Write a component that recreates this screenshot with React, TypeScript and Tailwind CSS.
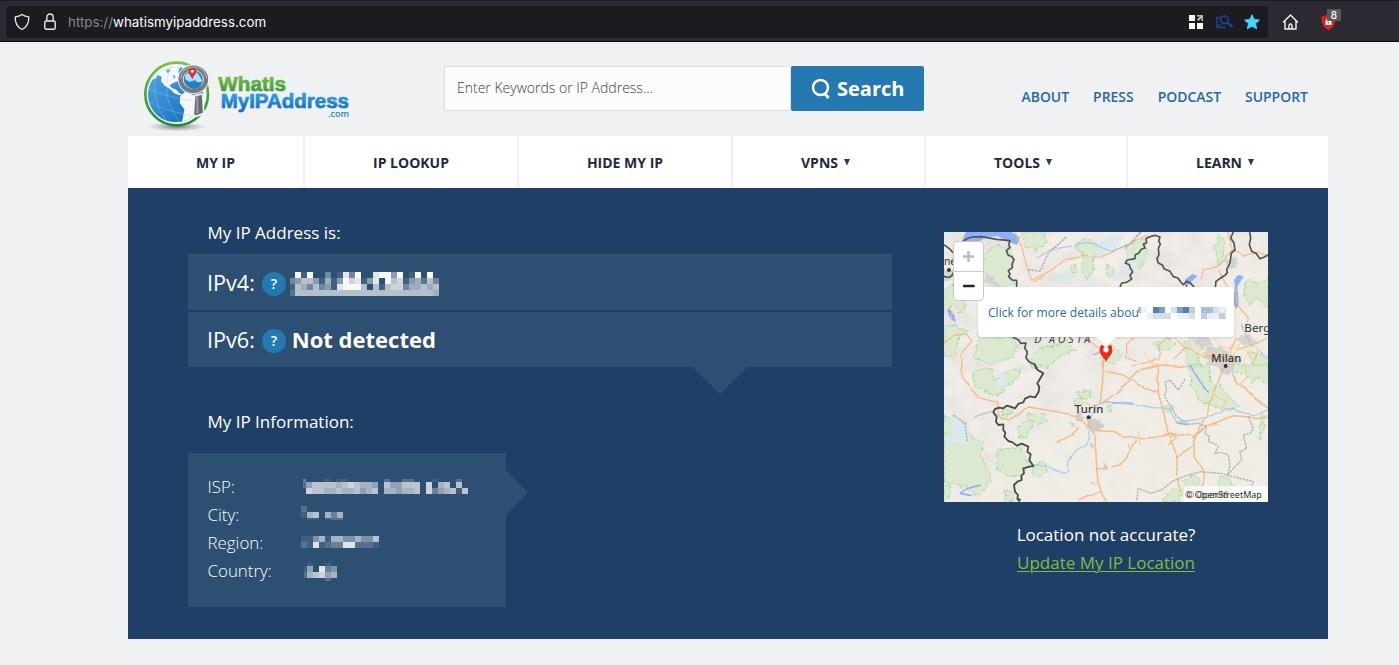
import React from "react";

const sans = "font-['Open_Sans',sans-serif]";

type MosaicProps = { rows: string[]; width: number; height: number; colour: string; className?: string; first?: number; heights?: number[] };

function Mosaic({ rows, width, height, colour, className, first = 6, heights = [6, 6, 6, 6] }: MosaicProps) {
  return (
    <svg width={width} height={height} className={className} shapeRendering="crispEdges" aria-hidden="true">
      {rows.map((row, y) =>
        row.split("").map((c, x) =>
          c === "0" ? null : (
            <rect
              key={`${x}-${y}`}
              x={x === 0 ? 0 : first + (x - 1) * 6}
              y={heights.slice(0, y).reduce((a, b) => a + b, 0)}
              width={x === 0 ? first : 6}
              height={heights[y]}
              fill={colour}
              opacity={Number(c) / 9.3}
            />
          ),
        ),
      )}
    </svg>
  );
}

function BrowserBar() {
  return (
    <div className="flex h-[42px] items-center border-b border-t border-b-[#0c0c0d] border-t-[#1c1b22] bg-[#2b2a33] pl-1.5 pt-px">
      <div className="flex h-8 w-[1262px] items-center rounded-[4px] bg-[#1c1b22] pl-2 pr-2">
        <svg width="16" height="18" viewBox="0 0 16 18" fill="none" stroke="#e8e8ea" strokeWidth="1.3" strokeLinejoin="round">
          <path d="M8 1.5C6 2.8 3.8 3.6 1.2 3.8C1 9.5 2.6 14 8 16.5C13.400 14 15 9.500 14.800 3.800C12.200 3.600 10 2.800 8 1.500Z" />
        </svg>
        <svg className="ml-3.5" width="12" height="18" viewBox="0 0 12 18" fill="none" stroke="#e8e8ea" strokeWidth="1.4">
          <rect x=".8" y="8" width="10.400" height="8.300" rx="1.500" />
          <path d="M2.800 8V4.500a3.200 3.500 0 0 1 6.400 0V8" />
        </svg>
        <span className="ml-3 pt-px font-[Inter,sans-serif] text-[13.35px] text-[#85848b]">
          https://<span className="text-[#fbfbfe]">whatismyipaddress.com</span>
        </span>
        <div className="ml-auto flex items-center">
          <svg width="16" height="16" viewBox="0 0 16 16">
            <path fill="#fff" d="M1 1h6v6H1zM1 9h6v6H1zM9 9h6v6H9z" />
            <path fill="#b9b9bc" d="M9 1h6v6h-1.500V4L10.500 7 9 5.500 12 2.500H9z" />
          </svg>
          <svg className="ml-3" width="17" height="16" viewBox="0 0 17 16" fill="none" stroke="#1f448c">
            <path strokeWidth="1.400" d="M4 3.500H1V13.500h9M1 13.500L5 10" />
            <circle cx="8.500" cy="5.800" r="3.800" strokeWidth="1.600" />
            <path strokeWidth="2.400" d="M11.300 8.600L16.500 13" />
          </svg>
          <svg className="ml-[11px]" width="16" height="16" viewBox="0 0 16 16">
            <path fill="#41d6fb" stroke="#41d6fb" strokeWidth="1" strokeLinejoin="round" d="M8 .8l2.100 4.800 5.300.5-4 3.500 1.200 5.200L8 12.100l-4.600 2.700 1.200-5.200-4-3.500 5.300-.5z" />
          </svg>
        </div>
      </div>
      <svg className="ml-[14px]" width="17" height="18" viewBox="0 0 17 18" fill="none" stroke="#f5f5f7" strokeWidth="1.400" strokeLinejoin="round" strokeLinecap="round">
        <path d="M1.500 9L8.500 2l7 7M3 8v8h11V8M7 16v-3.500a1.500 1.500 0 0 1 3 0V16" />
      </svg>
      <div className="relative ml-[22px] h-6 w-6">
        <svg className="mt-1" width="15" height="17" viewBox="0 0 15 17">
          <path fill="#d9221f" d="M7.500 0C5.500 1.500 3 2 .5 2c-.2 6.500.8 11 7 14.200C13.700 13 14.700 8.500 14.500 2 12 2 9.500 1.500 7.500 0z" />
          <path fill="#fff" d="M4.500 6.700h6V11h-6z" />
          <path fill="none" stroke="#fff" strokeWidth="1.100" d="M5.800 7V5.500h3.400V7" />
          <circle cx="7.500" cy="8.700" r=".8" fill="#d9221f" />
        </svg>
        <span className="absolute left-[6px] top-[-1px] flex h-3 w-[14px] items-center justify-center bg-[#595a59] font-[Inter,sans-serif] text-[10px] font-medium leading-none text-white">8</span>
      </div>
    </div>
  );
}

function Logo() {
  return (
    <svg width="225" height="84" viewBox="0 0 675 252" role="img" aria-label="WhatIs MyIPAddress.com">
      <defs>
        <linearGradient id="ring" x1="0" y1="0" x2="0" y2="1"><stop offset="0" stopColor="#7ac143" /><stop offset="1" stopColor="#258a3a" /></linearGradient>
        <linearGradient id="sea" x1="0" y1="0" x2="1" y2="1"><stop offset="0" stopColor="#52a9e3" /><stop offset="1" stopColor="#0f68ba" /></linearGradient>
        <linearGradient id="green" x1="0" y1="0" x2="0" y2="1"><stop offset=".2" stopColor="#78bd43" /><stop offset="1" stopColor="#2e9140" /></linearGradient>
        <linearGradient id="blue" x1="0" y1="0" x2="0" y2="1"><stop offset=".2" stopColor="#2a9de4" /><stop offset="1" stopColor="#1764b8" /></linearGradient>
        <radialGradient id="shade"><stop offset="0" stopColor="#555" stopOpacity=".75" /><stop offset="1" stopColor="#777" stopOpacity="0" /></radialGradient>
        <clipPath id="globe"><circle cx="122" cy="128" r="83" /></clipPath>
      </defs>
      <ellipse cx="125" cy="224" rx="88" ry="14" fill="url(#shade)" />
      <circle cx="125" cy="126" r="94" fill="#f7f9fa" stroke="url(#ring)" strokeWidth="8" />
      <circle cx="122" cy="128" r="83" fill="url(#sea)" />
      <g clipPath="url(#globe)">
        <path fill="#f5f8fa" d="M62 66L78 50 104 40 138 38 130 60 140 80 128 88 116 92 104 100 110 108 122 112 132 122 142 128 134 130 118 124 104 110 90 102 78 88 80 74ZM136 132L150 120 176 130 190 146 192 164 172 200 152 212 140 214 144 196 148 172 134 152Z" />
        <path fill="#f5f8fa" d="M46 84L66 56 72 62 62 80Z" />
        <path fill="#65b4e6" d="M92 56l10-6 4 8-8 6zM112 70l10 2-4 10z" />
        <path fill="none" stroke="#9bd2f1" strokeWidth="2" opacity=".55" d="M36 108Q96 138 205 152M40 148Q90 178 185 194M68 52Q38 128 94 208M108 44Q72 128 134 212" />
      </g>
      <path d="M179 131l24-5 3 58-22 9-9-4z" fill="#66686b" stroke="#f4f5f6" strokeWidth="5" />
      <path d="M184 132l6-1 1 52-7 3z" fill="#999b9e" />
      <ellipse cx="175" cy="82" rx="38" ry="36" fill="#308dce" stroke="#f5f5f5" strokeWidth="18" />
      <ellipse cx="175" cy="82" rx="38" ry="35" fill="none" stroke="#77797c" strokeWidth="13" />
      <path fill="none" stroke="#b9bbbd" strokeWidth="3" d="M137 80Q140 46 176 45Q209 46 215 78" />
      <path d="M150 70Q170 54 188 64L203 88Q190 96 180 84L164 90 152 84Z" fill="#b5def3" />
      <path d="M148 82Q175 100 204 88Q198 109 176 111Q155 109 148 82Z" fill="#1f7fc8" />
      <path d="M172 82C167 70 160 66 161 57Q163 47 172 47Q182 48 183 57C184 66 177 70 172 82Z" fill="#e02e22" />
      <circle cx="172" cy="58" r="4.500" fill="#fff" />
      <g fontFamily="Liberation Sans, Arial, sans-serif" fontWeight="700" strokeLinejoin="round">
        <text x="250" y="117" fontSize="63" textLength="203" lengthAdjust="spacingAndGlyphs" fill="url(#green)" stroke="url(#green)" strokeWidth="2">WhatIs</text>
        <text x="257" y="169" fontSize="60" textLength="385" lengthAdjust="spacingAndGlyphs" fill="url(#blue)" stroke="url(#blue)" strokeWidth="2">MyIPAddress</text>
        <text x="579" y="194" fontSize="26" fontFamily="Open Sans, sans-serif" fontWeight="600" textLength="63" lengthAdjust="spacingAndGlyphs" fill="#2583c8">.com</text>
      </g>
    </svg>
  );
}

function MapArt() {
  return (
    <svg width="324" height="270" viewBox="0 0 324 270" fontFamily="Noto Sans, sans-serif">
      <defs>
        <filter id="terrain" x="0" y="0" width="100%" height="100%">
          <feTurbulence type="fractalNoise" baseFrequency=".035 .05" numOctaves="4" seed="8" />
          <feColorMatrix values="0 0 0 0 .6  0 0 0 0 .58  0 0 0 0 .56  1.400 0 0 0 -.5" />
        </filter>
        <filter id="rough" x="-5%" y="-5%" width="110%" height="110%">
          <feTurbulence type="fractalNoise" baseFrequency=".06" numOctaves="2" seed="3" result="n" />
          <feDisplacementMap in="SourceGraphic" in2="n" scale="20" xChannelSelector="R" yChannelSelector="G" />
        </filter>
        <filter id="wavy" x="-5%" y="-5%" width="110%" height="110%">
          <feTurbulence type="fractalNoise" baseFrequency=".03" numOctaves="1" seed="5" result="n" />
          <feDisplacementMap in="SourceGraphic" in2="n" scale="10" xChannelSelector="R" yChannelSelector="G" />
        </filter>
        <linearGradient id="plain" x1="0" y1="0" x2="1" y2="1"><stop offset=".4" stopColor="#eeebe6" stopOpacity="0" /><stop offset=".6" stopColor="#efede4" /></linearGradient>
      </defs>
      <rect width="324" height="270" fill="#f1eeea" />
      <rect width="324" height="270" filter="url(#terrain)" opacity=".5" />
      <rect width="324" height="270" fill="url(#plain)" opacity=".85" />
      <g transform="translate(-4 -4) scale(.33333)">
        <g filter="url(#rough)">
          <g fill="#dce8d0" stroke="#8edb8b" strokeWidth="3" strokeDasharray="5 3">
            <path d="M130 80L165 52 205 55 225 95 208 135 225 170 175 180 130 140Z" /><path d="M245 12L315 12 320 45 290 65 255 55Z" />
            <path d="M410 45L440 30 475 50 465 85 460 130 440 155 425 120 430 80 410 65Z" /><path d="M555 55L610 35 625 80 600 120 565 90Z" />
            <path d="M835 20L855 35 850 90 838 110 825 80Z" /><path d="M393 110l14-5 3 28-13 3z" /><path d="M500 115l25 7-8 25-20-5z" />
            <path d="M918 155L950 165 985 150 985 240 950 210 925 235 912 195Z" /><path d="M12 185L40 170 65 180 80 225 65 260 35 230 12 260Z" />
            <path d="M12 290L50 295 85 310 55 330 45 380 12 390Z" /><path d="M120 300L160 330 210 328 235 350 220 390 150 410 100 390Z" />
            <path d="M265 395L300 360 350 350 380 335 410 365 360 385 320 415 275 420Z" /><path d="M555 270l35 5-4 20-32-5z" />
            <path d="M480 365L515 350 545 380 520 410 490 400Z" /><path d="M640 350L690 330 705 350 670 375Z" /><path d="M735 340L770 320 790 350 770 390 790 425 745 425Z" />
            <path d="M925 370L970 380 985 420 940 425Z" />
          </g>
          <g fill="#d9e9ed" opacity=".75"><path d="M480 30L560 15 530 60 500 70 490 95 470 80Z" /><path d="M340 155l35-25 35 10-30 25z" /><path d="M555 90l45-20-15 60-25 10z" /><path d="M530 125l25 8-30 30-16-5z" /></g>
          <g fill="#d4d3d0"><path d="M140 135l25 20 30 35-25-5-35-30z" /><path d="M755 335l35-15 30 30-35 15zM790 370l28-15 45 12 45 33-45 25-55-15zM885 330l45-10 20 25-30 12zM855 95l30-8 8 28-25 10z" /><path d="M12 130l30-5 5 25-35 12zM100 105l25 8-5 22-25-8z" /></g>
        </g>
        <g fill="#8eb0f4"><path d="M78 12L215 12 240 28 232 50 205 43 175 25 140 27 105 48 72 48 65 38Z" /><path d="M735 155l22-17 16 6-14 12-14 15-10 3z" /><path d="M882 155l12-14 17 4-9 15-10 16 5 55-9 12-11-25 8-38z" /><path d="M28 240l15 20 5 24-18-14-8-20z" /></g>
        <g filter="url(#wavy)" fill="none" strokeLinejoin="round">
          <g stroke="#f5bb85" strokeWidth="3.600">
            <path d="M225 12L243 50 260 115 275 157 330 128 370 100 420 85 480 87 510 75 560 50 625 20" /><path d="M280 163L315 142" />
            <path d="M860 12L880 60 850 100 820 120 790 125 780 155M835 125L862 178M880 60L910 85 950 70 985 85" />
            <path d="M882 178L895 235 925 270 920 290M690 325L660 350 655 400M425 328L460 350 490 365 490 420M12 345L42 322 80 322 96 338 65 375 65 420" />
            <path d="M580 328L560 350 560 390 590 400M705 328L735 360 790 385 850 380M735 360L700 390M890 327L870 360 880 420M985 330L940 350 890 365M955 370L935 420M575 415L650 395" />
          </g>
          <g stroke="#ffd48c" strokeWidth="3"><path d="M12 220L45 235 30 275M60 365L35 395M610 370L630 405 650 410M730 335l40 45 60-5 50 40M820 330l30 35 30-10 60 20M900 340l-30 60M950 330l-40 70" /></g>
          <path stroke="#9bc6e8" strokeWidth="3" d="M290 92L330 65 390 55 450 42 510 70 555 55 610 12M900 285L930 345 985 390" />
        </g>
        <g fill="none" strokeLinejoin="round">
          <path stroke="#aaaaad" strokeWidth="4" strokeDasharray="7 3" d="M265 125L300 130 325 75 360 45 380 25M600 12L575 45 555 58M460 380L495 370" />
          <path
            stroke="#545456"
            strokeWidth="5"
            d="M65 45L80 32 95 27 125 26 170 34 210 38 206 50 210 58 199 68 205 82 216 86 222 95 216 108 218 118 205 128 210 138 206 146 216 156 230 157 230 178M540 178L545 165 560 163 575 153 570 142 578 132 570 118 568 110 556 105 562 96 585 92 586 80 596 76 604 64 615 60 610 48 620 45 618 32 630 26 645 22 660 27 656 40 661 48 655 62 657 80 651 92 655 105 668 112 672 122 690 130 700 146 714 150 722 162 730 170 740 160 752 166 765 180M826 178L828 160 842 150 855 142 862 134 860 125 870 105 874 75 885 66 882 45 872 30 880 12M929 12L932 30 928 50 935 70 948 76 960 92 972 88 985 80M218 328L236 336 242 346 258 345 254 360 262 372 258 390 268 402 282 408 290 424M12 145Q35 155 42 130M12 50L28 62 40 75"
          />
        </g>
        <g fill="#333"><text x="12" y="111" fontSize="31">ne</text><circle cx="27" cy="126" r="6" /><text x="735" y="195" fontSize="30">Lugano</text><text x="913" y="312" fontSize="35">Berg</text><text x="814" y="401" fontSize="34" textLength="90" stroke="#333" strokeWidth=".7">Milan</text><text x="283" y="345" fontSize="32" fontStyle="italic" textLength="168" fill="#444">D'AOSTA</text></g>
      </g>
      <g transform="translate(-4 133) scale(.33333)">
        <g filter="url(#rough)">
          <g fill="#dce8d0" stroke="#8edb8b" strokeWidth="3" strokeDasharray="5 3">
            <path d="M95 25L130 5 160 15 160 40 215 12 245 15 230 45 195 65 180 90 145 85 110 70Z" /><path d="M12 150L45 160 50 180 80 175 90 215 130 230 125 275 152 330 145 360 115 395 85 370 12 350Z" /><path d="M175 255L240 245 270 300 245 330 210 335 170 315Z" /><path d="M235 185l35-20 8 15-20 35-20 6zM265 145l50 2 8 20-30 12-28-12zM185 135l35-8-5 20-28 5zM280 300l35-8 5 20-20 28-22-12z" /><path d="M12 360l20 3-5 30-15 7z" />
            <path d="M748 0L812 0 808 45 845 70 900 125 860 137 785 110 755 70ZM870 0l115 0 0 60-30-20-20 12-20-30-35-5z" /><path d="M735 340l30-10 20 12-25 30-28 5zM840 335l35 5 5 25-30 15-20-20zM700 370l25 10-10 30-50 0zM195 380l20-8 10 32-28 5zM410 80l40-5 5 20-30 8zM665 125l35-5 5 15-25 5zM400 105l22-8 8 18-22 8zM500 125l12-4 4 16-12 4z" />
            <path d="M965 150l12 0-5 45-15 30 5-50z" />
          </g>
          <g fill="#d9e9ed"><path d="M35 155l30 25 25 0-5 55-65 5 20-40z" /><path d="M180 25l20 5-10 40-20-10z" /></g>
          <g fill="#d0cfcd"><path d="M445 160l35 5 12 18-20 18-30-8zM405 150l20-10 5 22-22 12zM390 170l20 10-12 8zM835 0l45 0-8 25-30-5zM420 70l20 5-5 15zM450 230l16 8-8 15zM485 295l15 5-8 20zM565 235l15 10-15 5z" /></g>
        </g>
        <g filter="url(#wavy)" fill="none" strokeLinejoin="round">
          <path stroke="#8eb0f4" strokeWidth="5" d="M120 360L85 370 62 385 95 392M490 113L580 115M750 0L780 50 803 83M707 172L745 180" />
          <path stroke="#a8cee9" strokeWidth="3.500" d="M283 299L325 305 370 325 382 320 383 285 410 257 440 240 448 220 445 180 470 120 490 113 590 118 640 128 690 130 710 172 770 164 840 145 860 130 940 150 985 135" />
          <g stroke="#f5bb85" strokeWidth="4.300">
            <path d="M65 -8L68 40 115 98 173 112 180 155 210 167 265 126 320 135 410 152 455 195 525 200 550 218 640 218 690 205 765 215 800 183 880 152 985 160" />
            <path d="M490 -8L488 50 480 115 500 105 535 80 590 20 650 0M500 18L550 30 600 62 655 85 665 120 685 205 710 270 715 355 725 380M655 0L655 85" />
            <path d="M800 183L762 215 763 275 790 315 793 340 778 410M710 275L755 245 768 210M765 215L800 150 825 70 855 0M875 20L895 55 985 130M650 0L750 5" />
            <path d="M440 160L465 215 470 310 505 315M470 310L475 355 490 395 500 410M350 232L400 205 415 190M590 225L570 260 540 300 515 305M415 405L450 388 485 380M690 205L710 215 685 240" />
          </g>
          <path stroke="#f8d19a" strokeWidth="4" d="M595 200l5 40M450 355l25 3M800 183l35-5M820 90l40 20-20 20M915 0l5 40-20 20M345 230l15 5M435 110l35 25" />
        </g>
        <g fill="none" strokeLinejoin="round">
          <path stroke="#b0b0b1" strokeWidth="4" strokeDasharray="7 3" d="M40 150L75 175 82 230M105 155L158 138M735 42L725 60 715 75 690 45 675 52 680 75 674 90 680 105 696 130 710 155 745 178 775 175 800 185 795 205 808 215 805 230 820 234 835 245 825 265 845 262 865 270 870 300 862 335M925 155L940 190 930 205 910 210 920 250 900 260 905 285 880 310 865 330M590 405L595 370 630 385 665 375 695 350 730 335 780 320 840 325 940 350 935 365" />
          <path stroke="#4c4c4e" strokeWidth="5.500" d="M283 -4L292 14 310 25 302 38 292 55 298 66 296 80 286 97 270 94 255 101 250 112 236 116 225 130 215 126 200 122 190 130 178 128 165 132 160 142 170 155 168 170 175 180 190 178 190 195 196 203 193 215 205 228 218 232 230 242 245 236 265 245 262 260 272 268 268 285 280 303 268 305 250 310 252 325 244 332 245 345 232 350 222 360 225 380 234 390 232 402 240 404 235 410" />
        </g>
        <g fill="#303236"><text x="404" y="145" fontSize="34" textLength="86" stroke="#303236" strokeWidth=".7">Turin</text><circle cx="446" cy="157" r="6" /><circle cx="857" cy="3" r="6" /></g>
      </g>
    </svg>
  );
}

function MapCard() {
  return (
    <div className="relative h-[270px] w-[324px] overflow-hidden bg-[#f1eeea]">
      <MapArt />
      <div className="absolute left-[34px] top-[55px] flex h-[50px] w-[256px] items-center rounded-[4px] bg-white pl-2.5 pt-0.5 shadow-sm">
        <span className={`${sans} whitespace-nowrap text-[12.1px] leading-none text-[#2b6ba8]`}>Click for more details abou</span>
        <Mosaic className="absolute left-[160px] top-[20px]" first={3} width={88} height={12} colour="#376aa6" rows={["410860268304421" + "27", "001222011203113" + "23"]} />
      </div>
      <div className="absolute left-[9px] top-[9px] w-[31px] rounded-[5px] border border-[#c9c7c4] bg-white">
        <div className="flex h-[30px] items-center justify-center border-b border-[#ccc]"><svg width="12" height="12"><path d="M0 5.500h11M5.500 0v11" stroke="#bbb" strokeWidth="2.500" /></svg></div>
        <div className="flex h-[28px] items-center justify-center"><svg width="12" height="12"><path d="M1 6h9.500" stroke="#222" strokeWidth="2.700" strokeLinecap="round" /></svg></div>
      </div>
      <svg className="absolute left-[152px] top-[105px]" width="20" height="10"><path d="M0 0h20L10 9z" fill="#fff" /></svg>
      <svg className="absolute left-[154px] top-[111px]" width="16" height="21" viewBox="0 0 16 21">
        <path fill="#ee2a1a" d="M8 19C6.500 14.500 1.500 12 1.500 7Q1.500 4 3.500 1.500L8 5l4.500-3.500Q14.500 4 14.500 7C14.500 12 9.500 14.500 8 19z" />
        <circle cx="8" cy="6.800" r="2.700" fill="#fff" />
      </svg>
      <div className="absolute bottom-0 right-0 flex h-4 w-[84px] items-center bg-white/70 pl-px font-['Noto_Sans',sans-serif] text-[9px] leading-none text-[#333]">
        <span className="whitespace-nowrap">© OpenStreetMap</span>
        <span className="absolute left-[3px] opacity-60" aria-hidden="true">© OpenM</span>
      </div>
    </div>
  );
}

const nav = [
  { label: "MY IP", width: "w-[177px]" },
  { label: "IP LOOKUP", width: "w-[214px]" },
  { label: "HIDE MY IP", width: "w-[214px]" },
  { label: "VPNS", width: "w-[193px]", menu: true },
  { label: "TOOLS", width: "w-[202px]", menu: true },
  { label: "LEARN", width: "w-[200px]", menu: true },
];

const facts = [
  {
    label: "ISP:",
    mosaic: <Mosaic className="-mt-0.5 ml-0.5" first={3} width={166} height={15} heights={[3, 6, 6]} colour="#e8e9f0" rows={["3000101100000020022000100020", "2577776787665075577708067070", "0877667667567066566708356717"]} />,
  },
  { label: "City:", mosaic: <Mosaic className="-mt-1" width={44} height={14} heights={[6, 6, 2]} colour="#e8e9f0" rows={["2000000", "1670636", "0110122"]} /> },
  { label: "Region:", mosaic: <Mosaic className="-mt-[3px]" width={80} height={12} colour="#e8e9f0" rows={["1146166446447", "2191233992221"]} /> },
  { label: "Country:", mosaic: <Mosaic className="ml-[3px] mt-0.5" first={3} width={34} height={18} heights={[3, 6, 6, 3]} colour="#e8e9f0" rows={["010010", "150934", "267856", "000020"]} /> },
];

function Help() {
  return <span className="ml-[7px] flex h-6 w-6 items-center justify-center rounded-full bg-[#247ab0] text-[14px] font-semibold leading-none text-white">?</span>;
}

export default function App() {
  return (
    <div className={`${sans} h-[665px] w-[1399px] overflow-hidden bg-[#eff1f3]`}>
      <BrowserBar />
      <div className="ml-32 w-[1200px]">
        <header className="flex h-[94px] items-start">
          <div className="ml-[7px] mt-2.5 w-[309px]"><Logo /></div>
          <div className="mt-6 flex h-[45px] w-[480px]">
            <div className="flex h-full w-[347px] items-center border border-[#dddfe3] bg-[#fcfcfc] pb-[3px] pl-3 text-[14px] font-light text-[#404040]">Enter Keywords or IP Address...</div>
            <button className="flex h-full w-[133px] items-center rounded-[2px] bg-[#247ab0] pl-5 text-[20px] font-bold text-white">
              <svg className="mr-1.5" width="20" height="22" viewBox="0 0 20 22" fill="none" stroke="#fff"><circle cx="9.500" cy="9.500" r="7.500" strokeWidth="2.500" /><path d="M13.700 15.500L17.600 20" strokeWidth="3" /></svg>
              Search
            </button>
          </div>
          <nav className="ml-[97.500px] mt-[45px] flex gap-6 whitespace-nowrap text-[13.95px] font-semibold leading-5 text-[#2768a9]">
            <a>ABOUT</a><a>PRESS</a><a>PODCAST</a><a>SUPPORT</a>
          </nav>
        </header>
        <nav className="flex h-[52px] text-[14px] font-bold text-[#1d2b3c]">
          {nav.map((n, i) => (
            <div key={n.label} className={`${n.width} flex items-center justify-center bg-white ${i < 5 ? "border-r-2 border-[#eff1f3]" : ""}`}>
              {n.label}
              {n.menu && <svg className="ml-[5px] mr-[5px]" width="8" height="8"><path d="M1 1h6L4 7.500z" fill="#1f3e64" /></svg>}
            </div>
          ))}
        </nav>
        <main className="flex h-[451px] bg-[#1f3f66] pl-[60px] text-white">
          <section className="w-[704px]">
            <h2 className="mt-[33px] pl-[19.5px] text-[17px] leading-6">My IP Address is:</h2>
            <div className="mt-[9px] flex h-14 items-center bg-[#2c4f72] pl-5 pt-1 text-[21.6px]">
              <span className="-ml-px -mt-px">IPv4:</span><Help />
              <Mosaic className="ml-1" first={5} width={149} height={24} colour="#fff" rows={["0919003018390089949019090", "3466415149781480967145263", "1653634189996061677355656", "2666666666666666666666665"]} />
            </div>
            <div className="mt-0.5 flex h-[55px] items-center bg-[#2c4f72] pl-5 pt-[3px] text-[21.6px]">
              <span className="-ml-px -mt-0.5">IPv6:</span><Help /><strong className="-mt-1 ml-1.5 text-[22px] font-bold">Not detected</strong>
            </div>
            <svg className="ml-[504px] block" width="56" height="27"><path d="M0 0h56L28 27z" fill="#2c4f72" /></svg>
            <h2 className="mt-4 pl-[19.5px] text-[17px] leading-6">My IP Information:</h2>
            <div className="mt-[19px] flex items-start">
              <dl className="h-[154px] w-[318px] bg-[#2c4f72] pl-[19.5px] pt-5 text-[16.9px] font-light">
                {facts.map((f) => (
                  <div key={f.label} className="flex h-7 items-center"><dt className="w-[93.500px]">{f.label}</dt><dd>{f.mosaic}</dd></div>
                ))}
              </dl>
              <svg className="mt-[17px]" width="22" height="45"><path d="M0 0L22 22.500 0 45z" fill="#2c4f72" /></svg>
            </div>
          </section>
          <aside className="ml-[52px] mt-11 flex w-[324px] flex-col items-center text-[17px] leading-7">
            <MapCard />
            <p className="mt-[19px]">Location not accurate?</p>
            <a className="text-[#82ba42] underline decoration-1 underline-offset-2">Update My IP Location</a>
          </aside>
        </main>
      </div>
    </div>
  );
}
